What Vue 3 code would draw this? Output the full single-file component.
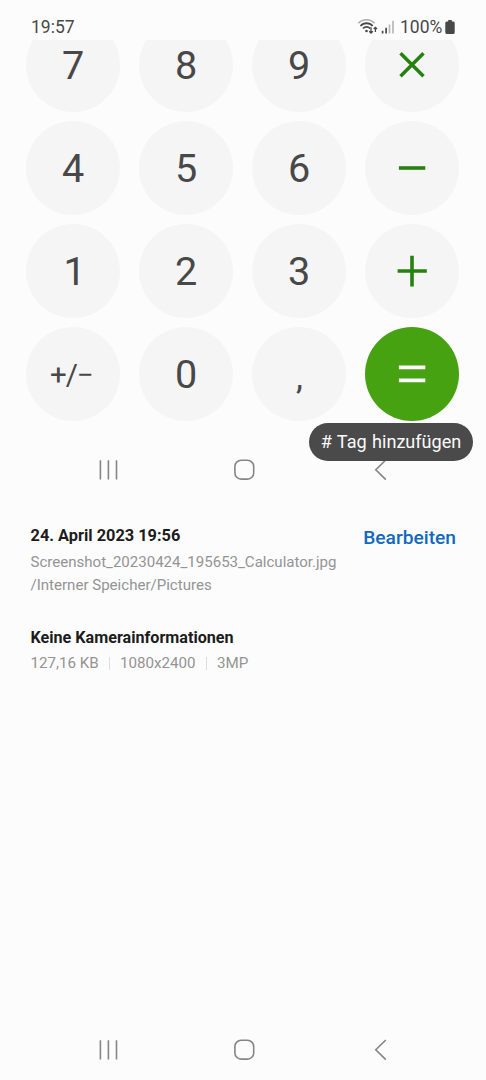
<script setup>
const keys = [
  { label: '7' }, { label: '8' }, { label: '9' }, { op: 'M-11.5 -11.7L11.5 11.3M11.5 -11.7L-11.5 11.3', name: 'times', w: 3.5 },
  { label: '4' }, { label: '5' }, { label: '6' }, { op: 'M-13.1 0H13.3', name: 'minus', w: 3.6 },
  { label: '1', kind: 'one' }, { label: '2' }, { label: '3' }, { op: 'M-14.4 0H14.8M0 -15.2V15.6', name: 'plus', w: 3.6 },
  { label: '+/−', kind: 'small' }, { label: '0' }, { label: ',', kind: 'comma' }, { op: 'M-13.1 -6.7H13.3M-13.1 6.3H13.3', name: 'equals', w: 3.8, primary: true },
]
</script>

<template>
  <div class="screen">
    <header class="status">
      <span class="time">19:57</span>
      <svg class="radio" width="40" height="18" viewBox="0 0 40 18" fill="none">
        <path d="M.4 5.3C4.8 .6 12.3 .6 16.6 5.3" stroke="#aaa" stroke-width="1.6" />
        <path d="M2.5 8C5.7 4.3 11.5 4.3 14.7 8M5 10.5C7 8.3 10.2 8.3 12.2 10.5" stroke="#484848" stroke-width="1.8" />
        <circle cx="8.5" cy="13" r="1.3" fill="#484848" />
        <path d="M13 9.3V15M11.2 13.2L13 15L14.8 13.2M17.4 14V9.2M15.7 11L17.4 9.3L19.1 11" stroke="#484848" stroke-width="1.3" />
        <path d="M24.6 12.7V15.5M28.1 9.8V15.5" stroke="#484848" stroke-width="1.7" />
        <path d="M31.5 6.4V15.5M35 2.7V15.5" stroke="#b8b8b8" stroke-width="1.7" />
      </svg>
      <span class="percent">100%</span>
      <svg class="battery" width="10" height="15" viewBox="0 0 10 15">
        <path d="M3.2 0H6.8V1.5H8.3Q9.7 1.5 9.7 3V12.4Q9.7 14 8.1 14H1.9Q.3 14 .3 12.4V3Q.3 1.5 1.7 1.5H3.2Z" fill="#484848" />
      </svg>
    </header>

    <section class="photo">
      <div class="keypad">
        <div v-for="(k, i) in keys" :key="i" class="key" :class="{ primary: k.primary }">
          <span v-if="k.label" :class="k.kind">{{ k.label }}</span>
          <svg v-else width="40" height="40" viewBox="-20 -20 40 40" fill="none" stroke="currentColor" :stroke-width="k.w">
            <path :d="k.op" />
          </svg>
        </div>
      </div>
      <div class="tag"># Tag hinzufügen</div>
    </section>

    <nav class="nav">
      <svg width="486" height="48" viewBox="0 0 486 48" fill="none" stroke="#858585" stroke-width="1.6">
        <path d="M100.4 14.2V33.4M108.4 14.2V33.4M116.5 14.2V33.4" />
        <rect x="234.9" y="14.3" width="18.8" height="18.8" rx="6.2" />
        <path d="M385.8 14L375.8 23.8L385.8 33.6" />
      </svg>
    </nav>

    <main class="details">
      <div class="heading">
        <h2 class="date">24. April 2023 19:56</h2>
        <span class="edit">Bearbeiten</span>
      </div>
      <p class="file">Screenshot_20230424_195653_Calculator.jpg</p>
      <p class="path">/Interner Speicher/Pictures</p>
      <h2 class="camera">Keine Kamerainformationen</h2>
      <div class="facts"><span>127,16 KB</span><span>1080x2400</span><span>3MP</span></div>
    </main>

    <nav class="nav system">
      <svg width="486" height="48" viewBox="0 0 486 48" fill="none" stroke="#858585" stroke-width="1.6">
        <path d="M100.4 14.2V33.4M108.4 14.2V33.4M116.5 14.2V33.4" />
        <rect x="234.9" y="14.3" width="18.8" height="18.8" rx="6.2" />
        <path d="M385.8 14L375.8 23.8L385.8 33.6" />
      </svg>
    </nav>
  </div>
</template>

<style>
body { background: #fcfcfc; }
</style>

<style scoped>
.screen { width: 486px; height: 1080px; overflow: hidden; display: flex; flex-direction: column; background: #fcfcfc; color: #484848; font-family: Roboto, "Liberation Sans", sans-serif; }
.status { height: 40px; flex: none; display: flex; box-sizing: border-box; padding: 17px 0 0 31px; font-size: 17.5px; line-height: 20px; }
.time { width: 327px; }
.radio { margin-top: 1px; }
.percent { margin-left: 2px; width: 45px; }
.battery { margin-top: 3px; }
.photo { display: flow-root; height: 406px; flex: none; position: relative; z-index: 1; clip-path: inset(0 0 -20px 0); }
.keypad { display: grid; grid-template-columns: repeat(4, 94px); grid-auto-rows: 94px; gap: 9px 19px; padding-left: 26px; margin-top: -22px; }
.key { display: flex; align-items: center; justify-content: center; border-radius: 50%; background: #f5f5f5; font-size: 39.6px; line-height: 46px; color: #484848; }
.key span { padding-top: 2px; }
.key svg { color: #26820e; }
.key.primary { background: #47a212; }
.key.primary svg { color: #fff; }
.key .one { padding-left: 3px; }
.key .small { font-size: 29.5px; letter-spacing: -1px; padding-top: 1px; padding-right: 3px; }
.key .comma { font-size: 35px; padding-top: 8px; padding-left: 1px; }
.tag { position: absolute; left: 309px; top: 383px; width: 164px; height: 37.5px; border-radius: 19px; background: #4a4a4a; color: #fafafa; font-size: 18.1px; word-spacing: 0.9px; line-height: 37px; text-align: center; white-space: nowrap; }
.nav { height: 48px; flex: none; }
.nav.system { margin-bottom: 6.5px; }
.nav svg { display: block; }
.details { flex: 1; padding: 31px 30px 0 30.5px; }
.heading { display: flex; justify-content: space-between; height: 24px; }
h2 { margin: 0; font-size: 16.15px; line-height: 23px; font-weight: 700; color: #1c1c1c; }
.date { font-size: 16.35px; line-height: 22px; }
.edit { font-size: 19.2px; line-height: 26px; font-weight: 500; color: #1169be; }
p { margin: 0; font-size: 15.05px; line-height: 23px; color: #949494; }
.file { margin-top: 2px; }
.camera { margin-top: 29px; }
.facts { display: flex; margin-top: 3px; font-size: 15.15px; line-height: 22px; color: #949494; }
.facts span + span { margin-left: 10.5px; padding-left: 10.8px; background: linear-gradient(#ddd, #ddd) 0 50% / 1px 13px no-repeat; }
</style>
